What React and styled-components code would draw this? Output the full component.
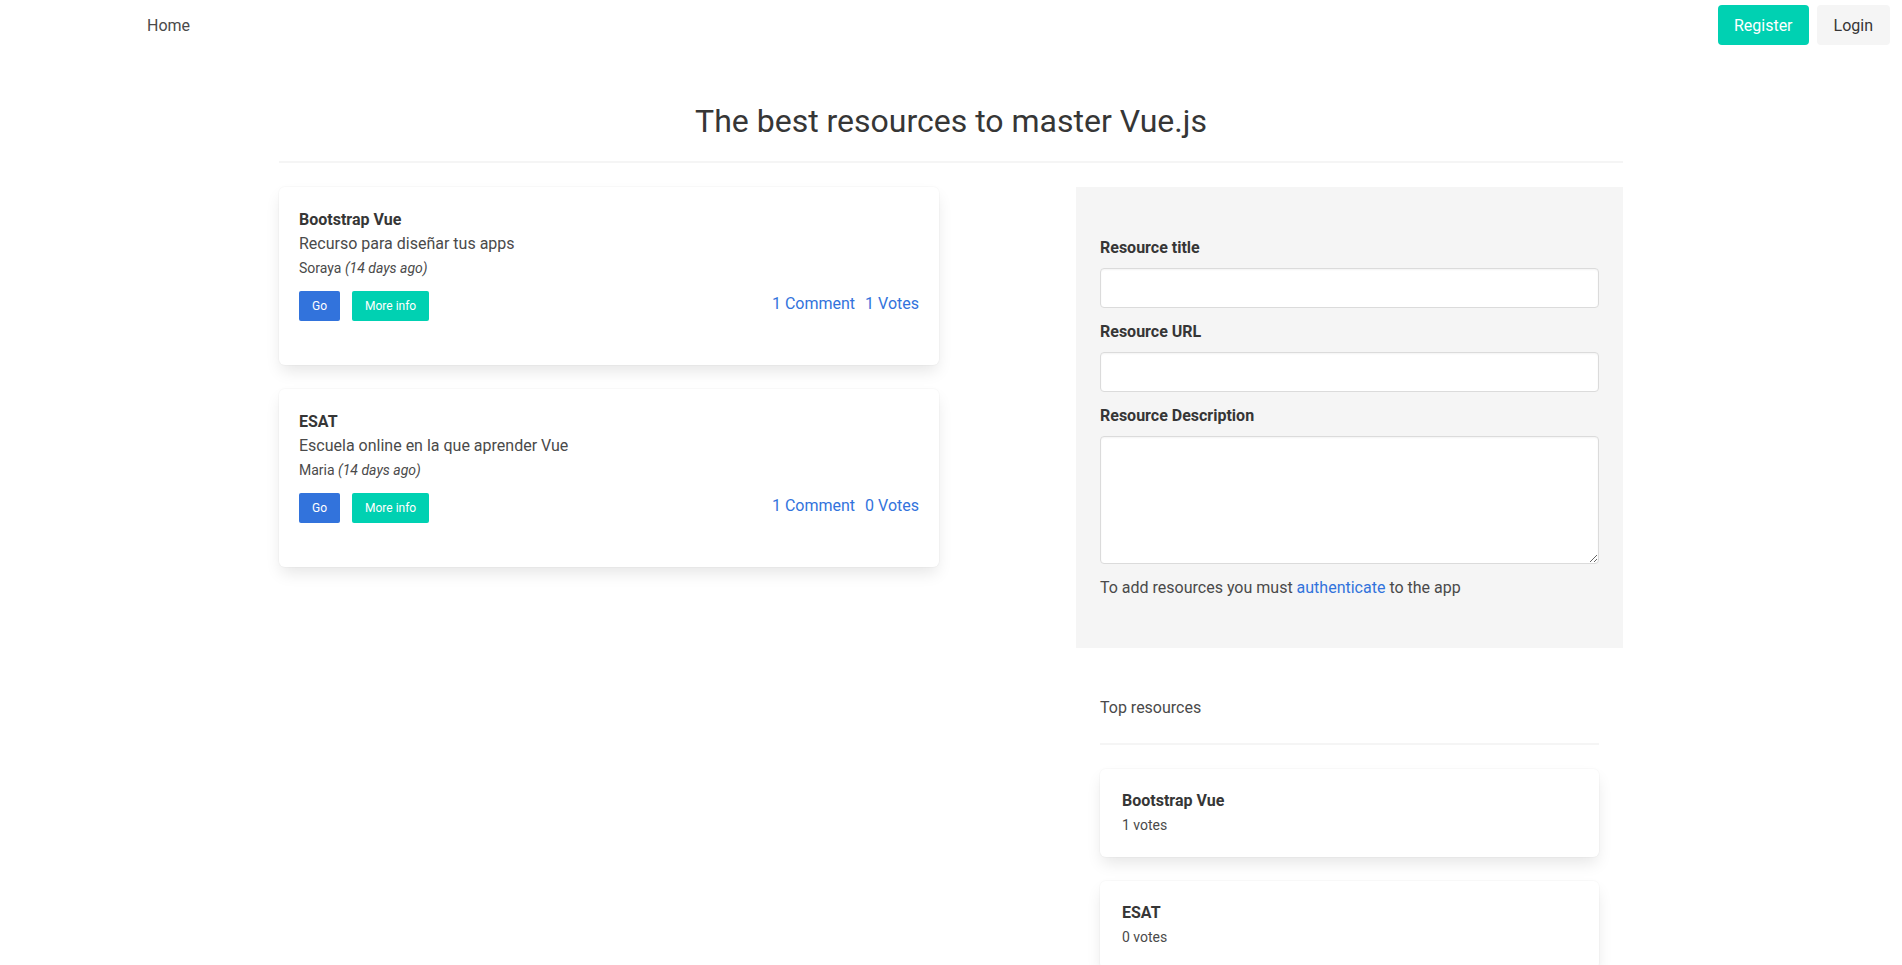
import React from 'react'
import styled, { createGlobalStyle, css } from 'styled-components'

const GlobalStyle = createGlobalStyle`
  *, *::before, *::after {
    box-sizing: border-box;
  }

  body {
    margin: 0;
    background: #ffffff;
    color: #4a4a4a;
    font-family: "Segoe UI", Roboto, "Liberation Sans", sans-serif;
    font-size: 16px;
    line-height: 1.5;
  }
`

const colors = {
  primary: '#00d1b2',
  link: '#3273dc',
  light: '#f5f5f5',
  dark: '#363636',
  text: '#4a4a4a',
  border: '#dbdbdb',
}

export const Navbar = styled.nav`
  height: 50px;
  display: flex;
  align-items: center;
  justify-content: space-between;
  padding: 0 12px 0 135px;
`

export const NavItem = styled.a`
  padding: 2px 12px 0;
  color: ${colors.text};
  font-size: 16px;
  cursor: pointer;
`

export const NavButtons = styled.div`
  display: flex;
  gap: 8px;
`

const buttonVariants = {
  primary: css`
    background: ${colors.primary};
    color: #ffffff;
  `,
  link: css`
    background: ${colors.link};
    color: #ffffff;
  `,
  light: css`
    background: ${colors.light};
    color: ${colors.dark};
  `,
}

export const Button = styled.button`
  display: inline-flex;
  align-items: center;
  justify-content: center;
  height: ${({ small }) => (small ? '30px' : '40px')};
  padding: 0 ${({ small, pad = 15 }) => (small ? 12 : pad)}px;
  border: 1px solid transparent;
  border-radius: ${({ small }) => (small ? '2px' : '4px')};
  font-family: inherit;
  font-size: ${({ small }) => (small ? '12px' : '16px')};
  cursor: pointer;
  ${({ variant }) => buttonVariants[variant]}
`

export const Container = styled.main`
  max-width: 1344px;
  margin: 0 auto;
  padding-top: 53px;
`

export const PageTitle = styled.h1`
  margin: 0;
  text-align: center;
  color: ${colors.dark};
  font-size: 32px;
  font-weight: 400;
  line-height: 36px;
`

export const Divider = styled.hr`
  height: 2px;
  margin: ${({ top = 22 }) => top}px 0 24px;
  border: none;
  background: ${colors.light};
`

export const Columns = styled.div`
  display: grid;
  grid-template-columns: 660px 547px;
  justify-content: space-between;
  align-items: start;
`

export const Stack = styled.div`
  display: flex;
  flex-direction: column;
  gap: 24px;
`

export const Card = styled.article`
  background: #ffffff;
  border-radius: 6px;
  box-shadow: 0 8px 16px -2px rgba(10, 10, 10, 0.1), 0 0 0 1px rgba(10, 10, 10, 0.02);
  padding: ${({ compact }) => (compact ? '20px 22px 21px' : '21px 20px 44px')};
`

export const CardTitle = styled.strong`
  display: block;
  color: ${colors.dark};
  font-size: 16px;
  font-weight: 700;
  line-height: 24px;
`

export const CardText = styled.p`
  margin: 0;
  font-size: 16px;
  line-height: 24px;
`

export const Meta = styled.p`
  margin: 2px 0 0;
  font-size: 14px;
  line-height: 21px;

  em {
    font-style: italic;
  }
`

export const Actions = styled.div`
  display: flex;
  align-items: center;
  justify-content: space-between;
  margin-top: 12px;
`

export const ButtonGroup = styled.div`
  display: flex;
  gap: 12px;
`

export const LinkGroup = styled.div`
  display: flex;
  gap: 10px;
  margin-top: -5px;
`

export const TextLink = styled.a`
  color: ${colors.link};
  font-size: 16px;
  cursor: pointer;
  text-decoration: none;
`

export const FormPanel = styled.form`
  background: ${colors.light};
  padding: 49px 24px 48px;
`

export const Field = styled.div`
  margin-bottom: 12px;
`

export const Label = styled.label`
  display: block;
  margin-bottom: 8px;
  color: ${colors.dark};
  font-size: 16px;
  font-weight: 700;
  line-height: 24px;
`

const controlStyles = css`
  display: block;
  width: 100%;
  border: 1px solid ${colors.border};
  border-radius: 4px;
  background: #ffffff;
  box-shadow: inset 0 1px 2px rgba(10, 10, 10, 0.05);
  font-family: inherit;
  font-size: 16px;
  color: ${colors.dark};
`

export const Input = styled.input`
  ${controlStyles}
  height: 40px;
  padding: 0 11px;
`

export const TextArea = styled.textarea`
  ${controlStyles}
  height: 128px;
  padding: 11px;
  resize: vertical;
`

export const Note = styled.p`
  margin: 0;
  font-size: 16px;
  line-height: 24px;
`

export const SideHeading = styled.h2`
  margin: 48px 0 0;
  padding: 0 24px;
  font-size: 16px;
  font-weight: 400;
  line-height: 24px;
`

export const TopList = styled(Stack)`
  padding: 0 24px;
`

export const SideDivider = styled(Divider)`
  margin-left: 24px;
  margin-right: 24px;
`

const resources = [
  {
    title: 'Bootstrap Vue',
    description: 'Recurso para diseñar tus apps',
    author: 'Soraya',
    comments: 1,
    votes: 1,
  },
  {
    title: 'ESAT',
    description: 'Escuela online en la que aprender Vue',
    author: 'Maria',
    comments: 1,
    votes: 0,
  },
]

const ResourceCard = ({ resource }) => (
  <Card>
    <CardTitle>{resource.title}</CardTitle>
    <CardText>{resource.description}</CardText>
    <Meta>
      {resource.author} <em>{'(14 days ago)'}</em>
    </Meta>
    <Actions>
      <ButtonGroup>
        <Button small variant="link">{'Go'}</Button>
        <Button small variant="primary">{'More info'}</Button>
      </ButtonGroup>
      <LinkGroup>
        <TextLink>{`${resource.comments} Comment`}</TextLink>
        <TextLink>{`${resource.votes} Votes`}</TextLink>
      </LinkGroup>
    </Actions>
  </Card>
)

const App = () => (
  <>
    <GlobalStyle />
    <Navbar>
      <NavItem>{'Home'}</NavItem>
      <NavButtons>
        <Button variant="primary">{'Register'}</Button>
        <Button variant="light" pad={16}>{'Login'}</Button>
      </NavButtons>
    </Navbar>
    <Container>
      <PageTitle>{'The best resources to master Vue.js'}</PageTitle>
      <Divider />
      <Columns>
        <Stack>
          {resources.map((resource) => (
            <ResourceCard key={resource.title} resource={resource} />
          ))}
        </Stack>
        <div>
          <FormPanel onSubmit={(e) => e.preventDefault()}>
            <Field>
              <Label>{'Resource title'}</Label>
              <Input type="text" />
            </Field>
            <Field>
              <Label>{'Resource URL'}</Label>
              <Input type="text" />
            </Field>
            <Field>
              <Label>{'Resource Description'}</Label>
              <TextArea />
            </Field>
            <Note>
              {'To add resources you must '}
              <TextLink>{'authenticate'}</TextLink>
              {' to the app'}
            </Note>
          </FormPanel>
          <SideHeading>{'Top resources'}</SideHeading>
          <SideDivider top={23} />
          <TopList>
            {resources.map((resource) => (
              <Card compact key={resource.title}>
                <CardTitle>{resource.title}</CardTitle>
                <Meta>{`${resource.votes} votes`}</Meta>
              </Card>
            ))}
          </TopList>
        </div>
      </Columns>
    </Container>
  </>
)

export default App
